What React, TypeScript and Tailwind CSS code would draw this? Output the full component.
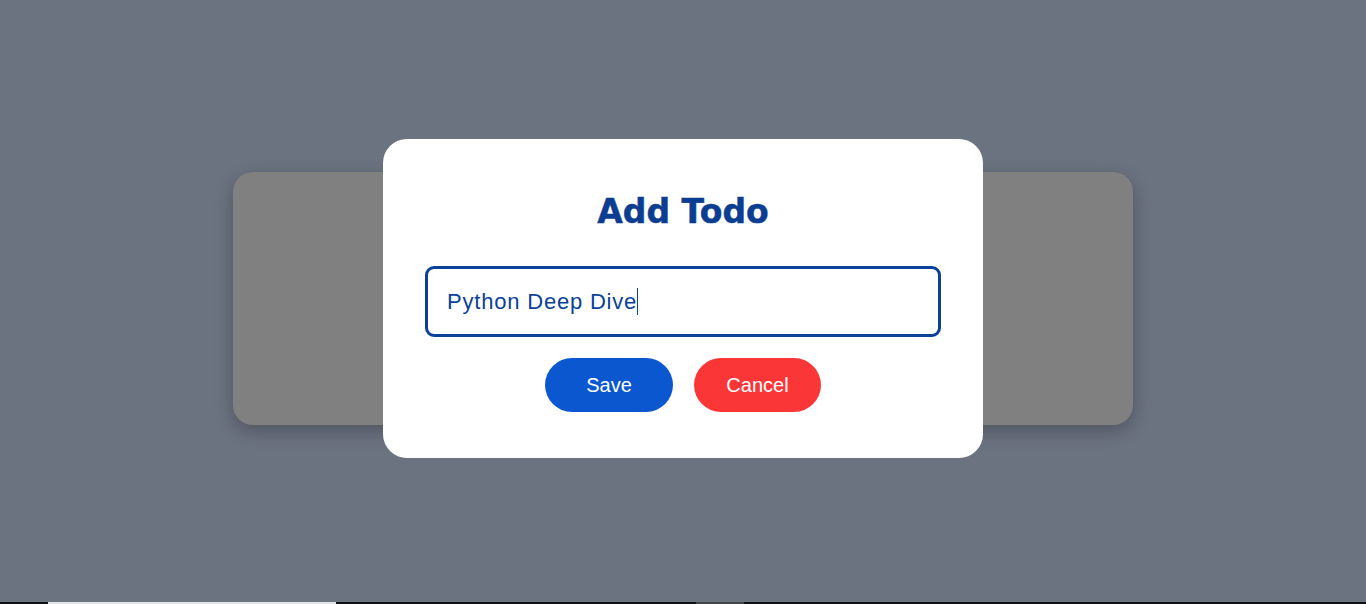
import React from "react";

export default function App() {
  return (
    <div className="w-[1366px] h-[604px] bg-[#6b7280] overflow-hidden" style={{ fontFamily: '"Liberation Sans", Arial, sans-serif' }}>
      <div className="relative h-[602px] flex items-center justify-center pb-[5px]">
        <div className="w-[900px] h-[253px] rounded-[20px] bg-[#808080] shadow-[0_6px_18px_rgba(0,0,0,0.25)]" />
        <div className="absolute inset-0 flex items-center justify-center pb-[5px]">
          <div className="w-[600px] h-[319px] rounded-[24px] bg-white flex flex-col items-center px-[42px] pt-[49px]">
            <h2
              className="h-[48px] leading-[48px] text-[33px] font-bold text-[#0b3d91] [-webkit-text-stroke:0.5px_#0b3d91]"
              style={{ fontFamily: '"DejaVu Sans", sans-serif' }}
            >
              Add Todo
            </h2>
            <div className="mt-[30px] w-full h-[71px] border-[3px] border-[#0b4199] rounded-[9px] flex items-center pl-[19px]">
              <span className="text-[22px] tracking-[0.8px] text-[#0b4199]">Python Deep Dive</span>
              <span className="w-px h-[27px] bg-[#0b4199]" />
            </div>
            <div className="mt-[21px] flex gap-[21px]">
              <div className="w-[128px] h-[54px] rounded-full bg-[#0b57d0] text-white text-[20px] flex items-center justify-center">Save</div>
              <div className="w-[127px] h-[54px] rounded-full bg-[#fb3636] text-white text-[20px] flex items-center justify-center">Cancel</div>
            </div>
          </div>
        </div>
      </div>
      <div className="h-[2px] bg-[#111111] flex">
        <div className="ml-[48px] w-[288px] h-full bg-[#e5e5e5]" />
        <div className="ml-[360px] w-[48px] h-full bg-[#444444]" />
      </div>
    </div>
  );
}
